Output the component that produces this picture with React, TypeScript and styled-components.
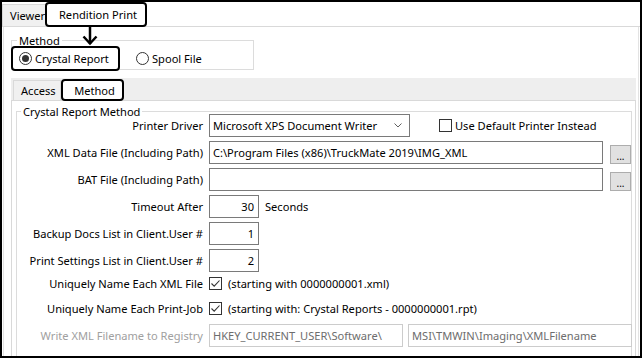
import React from 'react';
import styled, { createGlobalStyle, css } from 'styled-components';

const GlobalStyle = createGlobalStyle`
  html, body {
    margin: 0;
    padding: 0;
    background: #fff;
  }
  body {
    font-family: "Noto Sans", "Open Sans", sans-serif;
    font-size: 11.1px;
    color: #000;
  }
  * {
    box-sizing: border-box;
  }
`;

const Frame = styled.div`
  position: relative;
  width: 642px;
  height: 358px;
  border: 2px solid #000;
  background: #fff;
  overflow: hidden;
  display: flex;
  flex-direction: column;
`;

const TabStrip = styled.div`
  height: 25px;
  flex-shrink: 0;
  display: flex;
  align-items: flex-end;
  border-bottom: 1px solid #d9d9d9;
`;

const Tab = styled.div<{ $marked?: boolean; $w: number; $h: number; $ml?: number }>`
  flex-shrink: 0;
  width: ${p => p.$w}px;
  height: ${p => p.$h}px;
  margin-left: ${p => p.$ml ?? 0}px;
  display: flex;
  align-items: center;
  white-space: nowrap;
  ${p => p.$marked ? css`
    position: relative;
    z-index: 1;
    justify-content: center;
    padding-left: 4px;
    margin-bottom: -1px;
    background: #fff;
    border: 2px solid #000;
    border-radius: 4px;
  ` : css`
    padding-left: 7px;
    background: #f0f0f0;
    border: 1px solid #d9d9d9;
    border-bottom: none;
  `}
`;

const PagePanel = styled.div`
  flex: 1;
  margin: 0 1px;
  border-left: 1px solid #e3e3e3;
  border-right: 1px solid #e3e3e3;
  display: flex;
  flex-direction: column;
`;

const GroupBox = styled.div<{ $h: number; $m: string }>`
  flex-shrink: 0;
  height: ${p => p.$h}px;
  margin: ${p => p.$m};
  border: 1px solid #dcdcdc;
`;

const Caption = styled.div<{ $inset: number }>`
  width: fit-content;
  height: 15px;
  line-height: 15px;
  margin: -8px 0 -7px ${p => p.$inset}px;
  padding: 0 2px;
  background: #fff;
  white-space: nowrap;
`;

const RadioRow = styled.div`
  display: flex;
  align-items: center;
  margin-top: 5px;
`;

const RadioOption = styled.label<{ $marked?: boolean }>`
  flex-shrink: 0;
  height: 25px;
  display: flex;
  align-items: center;
  gap: 3px;
  white-space: nowrap;
  ${p => p.$marked ? css`
    position: relative;
    width: 109px;
    margin-left: -1px;
    padding-left: 6px;
    background: #fff;
    border: 2px solid #000;
    border-radius: 4px;
  ` : css`
    margin-left: 16px;
  `}
`;

const RadioCircle = styled.span<{ $on?: boolean }>`
  width: 13px;
  height: 13px;
  flex-shrink: 0;
  border: 1px solid #333;
  border-radius: 50%;
  display: flex;
  align-items: center;
  justify-content: center;
  &::after {
    content: '';
    display: ${p => (p.$on ? 'block' : 'none')};
    width: 7px;
    height: 7px;
    border-radius: 50%;
    background: #333;
  }
`;

const InnerTabs = styled.div`
  flex: 1;
  margin: 8px 0 0 7px;
  width: 625px;
  display: flex;
  flex-direction: column;
`;

const InnerStrip = styled.div`
  height: 22px;
  flex-shrink: 0;
  display: flex;
  align-items: flex-end;
  background: #eeeeee;
`;

const InnerPanel = styled.div`
  flex: 1;
  border: 1px solid #d9d9d9;
  display: flex;
  flex-direction: column;
`;

const FormRow = styled.div<{ $h: number }>`
  height: ${p => p.$h}px;
  display: flex;
  align-items: center;
`;

const FieldLabel = styled.span<{ $disabled?: boolean }>`
  width: 186px;
  flex-shrink: 0;
  margin-right: 6px;
  text-align: right;
  white-space: nowrap;
  color: ${p => (p.$disabled ? '#a0a0a0' : '#000')};
`;

const ComboBox = styled.div`
  width: 201px;
  height: 23px;
  flex-shrink: 0;
  border: 1px solid #7a7a7a;
  padding: 0 7px 0 3px;
  display: flex;
  align-items: center;
  justify-content: space-between;
  white-space: nowrap;
`;

const TextBox = styled.div<{ $w: number; $right?: boolean; $disabled?: boolean; $ml?: number }>`
  width: ${p => p.$w}px;
  height: 23px;
  flex-shrink: 0;
  margin-left: ${p => p.$ml ?? 0}px;
  border: 1px solid ${p => (p.$disabled ? '#cccccc' : '#7a7a7a')};
  padding: 0 4px 1px 3px;
  display: flex;
  align-items: center;
  justify-content: ${p => (p.$right ? 'flex-end' : 'flex-start')};
  color: ${p => (p.$disabled ? '#6d6d6d' : '#000')};
  white-space: nowrap;
  overflow: hidden;
`;

const BrowseButton = styled.div`
  width: 21px;
  height: 19px;
  flex-shrink: 0;
  align-self: flex-end;
  margin: 0 0 2px 7px;
  background: #e1e1e1;
  border: 1px solid #adadad;
  display: flex;
  align-items: center;
  justify-content: center;
  font-size: 10px;
  padding-top: 2px;
`;

const CheckOption = styled.label<{ $ml?: number; $gap?: number }>`
  display: flex;
  align-items: center;
  gap: ${p => p.$gap ?? 6}px;
  margin-left: ${p => p.$ml ?? 0}px;
  white-space: nowrap;
`;

const CheckBox = styled.span`
  width: 13px;
  height: 13px;
  flex-shrink: 0;
  border: 1px solid #333;
  background: #fff;
  display: flex;
  align-items: center;
  justify-content: center;
`;

const Unit = styled.span`
  margin-left: 6px;
`;

const Callout = styled.svg`
  position: absolute;
  left: 80px;
  top: 25px;
  z-index: 2;
`;

const Tick = () => (
  <svg width="11" height="11" viewBox="0 0 11 11">
    <path d="M1.5 5.5 L4.2 8.2 L9.5 2.5" fill="none" stroke="#333" strokeWidth="1.1" />
  </svg>
);

const Chevron = () => (
  <svg width="8" height="5" viewBox="0 0 8 5">
    <path d="M0.5 0.5 L4 4 L7.5 0.5" fill="none" stroke="#606060" strokeWidth="1" />
  </svg>
);

export default function App() {
  return (
    <>
      <GlobalStyle />
      <Frame>
        <TabStrip>
          <Tab $w={45} $h={22}>Viewer</Tab>
          <Tab $marked $w={102} $h={25} $ml={-2}>Rendition Print</Tab>
        </TabStrip>

        <Callout width="16" height="20" viewBox="0 0 16 20">
          <path d="M8 0 V17" stroke="#000" strokeWidth="2.5" fill="none" />
          <path d="M1.5 9.5 L8 16.5 L14.5 9.5" stroke="#000" strokeWidth="2.5" fill="none" />
        </Callout>

        <PagePanel>
          <GroupBox $h={30} $m="13px 0 0 7px" style={{ width: 243 }}>
            <Caption $inset={5}>Method</Caption>
            <RadioRow>
              <RadioOption $marked>
                <RadioCircle $on />
                Crystal Report
              </RadioOption>
              <RadioOption>
                <RadioCircle />
                Spool File
              </RadioOption>
            </RadioRow>
          </GroupBox>

          <InnerTabs>
            <InnerStrip>
              <Tab $w={48} $h={20} $ml={2}>Access</Tab>
              <Tab $marked $w={63} $h={22}>Method</Tab>
            </InnerStrip>
            <InnerPanel>
              <GroupBox $h={260} $m="10px 3px 0 4px">
                <Caption $inset={4}>Crystal Report Method</Caption>

                <FormRow $h={27}>
                  <FieldLabel>Printer Driver</FieldLabel>
                  <ComboBox>
                    Microsoft XPS Document Writer
                    <Chevron />
                  </ComboBox>
                  <CheckOption $ml={29} $gap={3}>
                    <CheckBox />
                    Use Default Printer Instead
                  </CheckOption>
                </FormRow>

                <FormRow $h={27}>
                  <FieldLabel>XML Data File (Including Path)</FieldLabel>
                  <TextBox $w={394}>{'C:\\Program Files (x86)\\TruckMate 2019\\IMG_XML'}</TextBox>
                  <BrowseButton>...</BrowseButton>
                </FormRow>

                <FormRow $h={27}>
                  <FieldLabel>BAT File (Including Path)</FieldLabel>
                  <TextBox $w={394} />
                  <BrowseButton>...</BrowseButton>
                </FormRow>

                <FormRow $h={27}>
                  <FieldLabel>Timeout After</FieldLabel>
                  <TextBox $w={50} $right>30</TextBox>
                  <Unit>Seconds</Unit>
                </FormRow>

                <FormRow $h={27}>
                  <FieldLabel>Backup Docs List in Client.User #</FieldLabel>
                  <TextBox $w={50} $right>1</TextBox>
                </FormRow>

                <FormRow $h={27}>
                  <FieldLabel>Print Settings List in Client.User #</FieldLabel>
                  <TextBox $w={50} $right>2</TextBox>
                </FormRow>

                <FormRow $h={19}>
                  <FieldLabel>Uniquely Name Each XML File</FieldLabel>
                  <CheckOption>
                    <CheckBox><Tick /></CheckBox>
                    (starting with 0000000001.xml)
                  </CheckOption>
                </FormRow>

                <FormRow $h={31}>
                  <FieldLabel>Uniquely Name Each Print-Job</FieldLabel>
                  <CheckOption>
                    <CheckBox><Tick /></CheckBox>
                    (starting with: Crystal Reports - 0000000001.rpt)
                  </CheckOption>
                </FormRow>

                <FormRow $h={23}>
                  <FieldLabel $disabled>Write XML Filename to Registry</FieldLabel>
                  <TextBox $w={194} $disabled>{'HKEY_CURRENT_USER\\Software\\'}</TextBox>
                  <TextBox $w={224} $ml={5} $disabled>{'MSI\\TMWIN\\Imaging\\XMLFilename'}</TextBox>
                </FormRow>
              </GroupBox>
            </InnerPanel>
          </InnerTabs>
        </PagePanel>
      </Frame>
    </>
  );
}
